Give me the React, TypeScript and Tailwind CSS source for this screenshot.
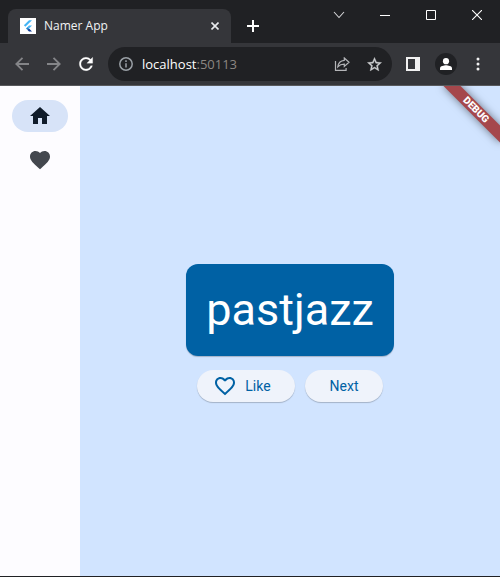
import React from "react";

const toolButton = "flex items-center justify-center shrink-0";

function TabStrip() {
  return (
    <header className="flex h-[43px] bg-[#202124] pl-2">
      <div className="flex w-[223px] mt-[9px] items-center rounded-t-lg bg-[#35363a] pl-3 pr-2">
        <svg className="h-4 w-4 bg-white" viewBox="0 0 16 16" aria-hidden="true">
          <path d="M9 2.200h3L5.400 8.800 3.900 7.300z" fill="#42b5f6" />
          <path d="M9 7.400h3L9 10.400 7.500 8.900z" fill="#42b5f6" />
          <path d="M6 10.400l1.500-1.500L9 10.400l-1.500 1.500z" fill="#1e88d2" />
          <path d="M7.500 11.900L9 10.400l3 3H9z" fill="#0d3a94" />
        </svg>
        <span className="ml-2 flex-1 text-[12px] leading-4 text-[#f1f3f4]">Namer App</span>
        <button aria-label="Close tab" className={toolButton + " h-4 w-4"}>
          <svg width="8" height="8" viewBox="0 0 8 8" stroke="#e8eaed" strokeWidth="1.6">
            <path d="M.5 .5l7 7M7.5 .5l-7 7" />
          </svg>
        </button>
      </div>
      <button aria-label="New tab" className={toolButton + " ml-2 mt-3 h-7 w-7"}>
        <svg width="12" height="12" viewBox="0 0 12 12" stroke="#fff" strokeWidth="2">
          <path d="M6 0v12M0 6h12" />
        </svg>
      </button>
      <div className="ml-auto flex h-[30px]">
        <button aria-label="Search tabs" className={toolButton + " w-[46px]"}>
          <svg width="12" height="8" viewBox="0 0 12 8" fill="none" stroke="#d5d6d8" strokeWidth="1.1">
            <path d="M1 1l5 5.5L11 1" />
          </svg>
        </button>
        <button aria-label="Minimize" className={toolButton + " w-[46px]"}>
          <svg width="10" height="10" viewBox="0 0 10 10" stroke="#fff">
            <path d="M0 5.5h10" />
          </svg>
        </button>
        <button aria-label="Maximize" className={toolButton + " w-[46px]"}>
          <svg width="10" height="10" viewBox="0 0 10 10" fill="none" stroke="#fff">
            <path d="M.5 .5h9v9h-9z" />
          </svg>
        </button>
        <button aria-label="Close window" className={toolButton + " w-[46px]"}>
          <svg width="10" height="10" viewBox="0 0 10 10" stroke="#fff" strokeWidth="1.1">
            <path d="M0 0l10 10M10 0L0 10" />
          </svg>
        </button>
      </div>
    </header>
  );
}

function Toolbar() {
  return (
    <nav className="flex h-[43px] items-center border-b border-[#58595c] bg-[#35363a] pl-2">
      <button aria-label="Back" className={toolButton + " h-7 w-7"}>
        <svg width="14" height="14" viewBox="0 0 14 14" fill="none" stroke="#848588" strokeWidth="1.8">
          <path d="M14 7H1.5M7.5 .8L1.3 7l6.2 6.2" />
        </svg>
      </button>
      <button aria-label="Forward" className={toolButton + " ml-1 h-7 w-7"}>
        <svg width="14" height="14" viewBox="0 0 14 14" fill="none" stroke="#848588" strokeWidth="1.8">
          <path d="M0 7h12.5M6.5 .8L12.7 7l-6.2 6.2" />
        </svg>
      </button>
      <button aria-label="Reload" className={toolButton + " ml-1 h-7 w-7"}>
        <svg width="20" height="20" viewBox="0 0 24 24" fill="#fff">
          <path d="M17.65 6.35C16.2 4.9 14.21 4 12 4c-4.42 0-7.99 3.58-7.99 8s3.57 8 7.99 8c3.73 0 6.84-2.55 7.73-6h-2.08c-.82 2.33-3.04 4-5.65 4-3.31 0-6-2.69-6-6s2.69-6 6-6c1.66 0 3.14.69 4.22 1.78L13 11h7V4l-2.35 2.35z" stroke="#fff" strokeWidth=".3" />
        </svg>
      </button>
      <div className="ml-2 flex h-[34px] flex-1 items-center rounded-full bg-[#202124] pl-[11px] pr-[10px]">
        <svg className="shrink-0" width="14" height="14" viewBox="0 0 14 14" fill="none" stroke="#9aa0a6" strokeWidth="1.5">
          <circle cx="7" cy="7" r="6.2" />
          <path d="M7 6.2v4.2M7 3.3v1.6" />
        </svg>
        <div className="ml-[9px] flex-1 text-[13px] leading-5 text-white">
          localhost<span className="text-[#8d8782]">:50113</span>
        </div>
        <button aria-label="Share" className={toolButton + " h-4 w-4"}>
          <svg width="16" height="14" viewBox="0 0 16 14" fill="none" stroke="#b4b5b8" strokeWidth="1.2">
            <path d="M1.500 4v9.400h10.600V11" />
            <path d="M10.300 1l4.700 4.200-4.700 4.200V7.200C7.500 7.200 5.500 8 3.800 9.800 4.200 6.300 6.500 3.700 10.300 3.300z" />
          </svg>
        </button>
        <button aria-label="Bookmark" className={toolButton + " ml-4 h-4 w-4"}>
          <svg width="17" height="17" viewBox="0 0 24 24" fill="#cfd0d2" className="shrink-0">
            <path d="M22 9.240l-7.190-.620L12 2 9.190 8.630 2 9.240l5.460 4.730L5.820 21 12 17.270 18.180 21l-1.630-7.030L22 9.240zM12 15.400l-3.760 2.270 1-4.280-3.320-2.880 4.380-.380L12 6.100l1.710 4.040 4.380.380-3.320 2.880 1 4.280L12 15.400z" stroke="#cfd0d2" strokeWidth=".5" />
          </svg>
        </button>
      </div>
      <button aria-label="Side panel" className={toolButton + " ml-[7px] h-7 w-7"}>
        <svg width="14" height="14" viewBox="0 0 14 14" fill="#f1f1f1">
          <path fillRule="evenodd" d="M0 0h14v14H0zM2 2v10h7V2z" />
        </svg>
      </button>
      <button aria-label="Profile" className={toolButton + " ml-2 h-[22px] w-[22px] rounded-full bg-[#202124]"}>
        <svg width="12" height="12" viewBox="0 0 12 12" fill="#fff">
          <circle cx="6" cy="3.2" r="3.1" />
          <path d="M0 12v-1.800C0 8.200 4 7.300 6 7.300s6 .9 6 2.900V12z" />
        </svg>
      </button>
      <button aria-label="Menu" className={toolButton + " ml-[7px] mr-2 h-7 w-7"}>
        <svg width="4" height="14" viewBox="0 0 4 14" fill="#f1f1f1">
          <circle cx="2" cy="2" r="1.500" />
          <circle cx="2" cy="7" r="1.500" />
          <circle cx="2" cy="12" r="1.500" />
        </svg>
      </button>
    </nav>
  );
}

function Rail() {
  return (
    <aside className="flex w-20 shrink-0 flex-col items-center gap-3 bg-[#fdfcff] pt-[14px]">
      <button aria-label="Home" className="flex h-8 w-14 items-center justify-center rounded-full bg-[#d7e3f8]">
        <svg width="24" height="24" viewBox="0 0 24 24" fill="#101c2b">
          <path d="M10 20v-6h4v6h5v-8h3L12 3 2 12h3v8z" />
        </svg>
      </button>
      <button aria-label="Favorites" className="flex h-8 w-14 items-center justify-center">
        <svg width="24" height="24" viewBox="0 0 24 24" fill="#43474e">
          <path d="M12 21.350l-1.450-1.320C5.400 15.360 2 12.280 2 8.500 2 5.420 4.420 3 7.500 3c1.740 0 3.410.810 4.500 2.090C13.090 3.810 14.760 3 16.500 3 19.580 3 22 5.420 22 8.500c0 3.780-3.400 6.860-8.550 11.540L12 21.350z" />
        </svg>
      </button>
    </aside>
  );
}

const pill =
  "flex h-8 items-center justify-center rounded-full bg-[#eff3fb] text-[14px] leading-5 font-normal text-[#0061a4] shadow-[0_1px_1px_rgba(0,0,0,0.22)]";

export default function App() {
  return (
    <div className="flex min-h-screen flex-col border-b border-[#202124] bg-[#d1e4ff] font-['Open_Sans','Noto_Sans',sans-serif]">
      <TabStrip />
      <Toolbar />
      <div className="relative flex flex-1 overflow-hidden font-[Roboto,sans-serif]">
        <Rail />
        <main className="flex flex-1 flex-col items-center justify-center">
          <h1 className="m-1 rounded-xl bg-[#0061a4] p-5 text-[45px] leading-[52px] font-normal text-white shadow-[0_1px_1px_rgba(0,0,0,0.22)]">
            pastjazz
          </h1>
          <div className="mt-[10px] flex gap-[10px]">
            <button className={pill + " min-w-[98px] gap-2 pl-4 pr-6"}>
              <svg width="24" height="24" viewBox="0 0 24 24" fill="#0061a4" aria-hidden="true">
                <path d="M16.500 3c-1.740 0-3.410.810-4.500 2.090C10.910 3.810 9.240 3 7.500 3 4.420 3 2 5.420 2 8.500c0 3.780 3.400 6.860 8.550 11.540L12 21.350l1.450-1.320C18.600 15.360 22 12.280 22 8.500 22 5.420 19.580 3 16.500 3zm-4.400 15.550l-.1.100-.1-.100C7.140 14.240 4 11.390 4 8.500 4 6.500 5.500 5 7.500 5c1.540 0 3.040.990 3.570 2.360h1.870C13.460 5.990 14.960 5 16.500 5c2 0 3.500 1.500 3.500 3.500 0 2.890-3.140 5.740-7.900 10.050z" />
              </svg>
              Like
            </button>
            <button className={pill + " min-w-[78px] px-6"}>Next</button>
          </div>
        </main>
        <div className="pointer-events-none absolute top-0 right-0 h-20 w-20 overflow-hidden">
          <div className="absolute top-[18px] -right-4 flex h-3 w-20 rotate-45 items-center justify-center bg-[#a5474c] text-[10px] leading-3 font-black text-white shadow-[0_0_8px_rgba(0,0,0,0.5)]">
            DEBUG
          </div>
        </div>
      </div>
    </div>
  );
}
